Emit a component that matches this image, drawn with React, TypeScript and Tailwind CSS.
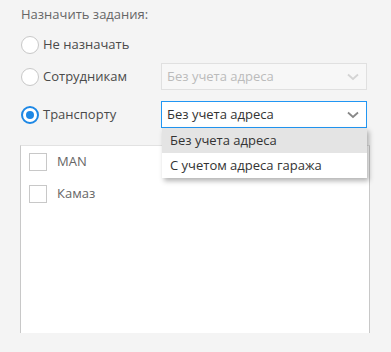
import React from 'react';

function Radio({ checked, label }: { checked?: boolean; label: string }) {
  return (
    <label className="flex w-[140px] items-center">
      <span
        className={
          checked
            ? 'flex h-[18px] w-[18px] items-center justify-center rounded-full border-[2px] border-[#1e88e5] bg-white'
            : 'h-[18px] w-[18px] rounded-full border border-[#c8c8c8] bg-white'
        }
      >
        {checked && <span className="h-[8px] w-[8px] rounded-full bg-[#1e88e5]"></span>}
      </span>
      <span className="ml-[4px] text-[13px] text-[#4a4a4a]">{label}</span>
    </label>
  );
}

function Chevron({ color }: { color: string }) {
  return (
    <svg width="12" height="8" viewBox="0 0 12 8" fill="none">
      <path d="M1 1.5 L6 6 L11 1.5" stroke={color} strokeWidth="1.8" />
    </svg>
  );
}

export default function App() {
  return (
    <div
      className="h-[352px] w-full bg-[#f4f4f4] pl-[21px]"
      style={{ fontFamily: '"Open Sans", sans-serif' }}
    >
      <div className="pt-[4px] text-[13px] leading-[20px] text-[#666]">Назначить задания:</div>

      <div className="mt-[11px] flex h-[20px] items-center">
        <Radio label="Не назначать" />
      </div>

      <div className="mt-[8px] flex h-[27px] items-center">
        <Radio label="Сотрудникам" />
        <div className="flex h-[27px] w-[206px] items-center justify-between border border-[#e0e0e0] bg-[#f7f7f7] pl-[5px] pr-[7px] text-[13px] text-[#bbb]">
          <span>Без учета адреса</span>
          <Chevron color="#d4d4d4" />
        </div>
      </div>

      <div className="relative mt-[11px] flex h-[27px] items-center">
        <Radio checked label="Транспорту" />
        <div className="flex h-[27px] w-[206px] items-center justify-between border border-[#2196f3] bg-white pl-[5px] pr-[7px] text-[13px] text-[#333]">
          <span>Без учета адреса</span>
          <Chevron color="#888" />
        </div>
        <div className="absolute left-[141px] top-[27px] z-10 w-[205px] bg-white text-[13px] text-[#333] shadow-[2px_3px_5px_rgba(0,0,0,0.3)]">
          <div className="flex h-[25px] items-center bg-[#e4e4e4] pl-[8px]">Без учета адреса</div>
          <div className="flex h-[25px] items-center pl-[8px]">С учетом адреса гаража</div>
        </div>
      </div>

      <div className="ml-[-1px] mt-[17px] h-[188px] w-[350px] border-x border-t border-x-[#c8c8c8] border-t-[#e2e2e2] bg-white pl-[8px] pt-[7px]">
        <div className="flex h-[18px] items-center">
          <span className="h-[18px] w-[18px] border border-[#c8c8c8] bg-white"></span>
          <span className="ml-[10px] text-[13px] text-[#666]">MAN</span>
        </div>
        <div className="mt-[14px] flex h-[18px] items-center">
          <span className="h-[18px] w-[18px] border border-[#c8c8c8] bg-white"></span>
          <span className="ml-[10px] text-[13px] text-[#666]">Камаз</span>
        </div>
      </div>
    </div>
  );
}
